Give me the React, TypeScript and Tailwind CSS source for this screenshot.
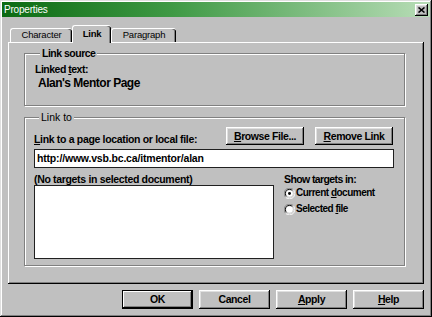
import React from "react";

const raised =
  "shadow-[inset_-1px_-1px_0_#000,inset_1px_1px_0_#fff,inset_-2px_-2px_0_#808080,inset_2px_2px_0_#dfdfdf]";

function Btn({ children, w, def }: { children: React.ReactNode; w: string; def?: boolean }) {
  return (
    <div
      className={`${w} h-[19px] bg-[#c0c0c0] flex items-center justify-center text-[10.5px] tracking-[-0.4px] font-bold leading-none ${
        def
          ? "border border-black shadow-[inset_-1px_-1px_0_#000,inset_1px_1px_0_#fff,inset_-2px_-2px_0_#808080]"
          : raised
      }`}
    >
      {children}
    </div>
  );
}

function Radio({ checked }: { checked?: boolean }) {
  return (
    <svg width="11" height="11" viewBox="0 0 12 12" className="shrink-0">
      <path d="M10.2 1.8 A5.5 5.5 0 0 0 1.8 10.2" stroke="#808080" strokeWidth="1" fill="none" />
      <path d="M1.8 10.2 A5.5 5.5 0 0 0 10.2 1.8" stroke="#ffffff" strokeWidth="1" fill="none" />
      <path d="M9.2 2.8 A4.5 4.5 0 0 0 2.8 9.2" stroke="#000" strokeWidth="1" fill="none" />
      <path d="M2.8 9.2 A4.5 4.5 0 0 0 9.2 2.8" stroke="#dfdfdf" strokeWidth="1" fill="none" />
      <circle cx="6" cy="6" r="3.6" fill="#fff" />
      {checked && <circle cx="6" cy="6" r="1.6" fill="#000" />}
    </svg>
  );
}

export default function App() {
  return (
    <div className="w-[432px] h-[317px] bg-[#c0c0c0] p-[2px] font-['Liberation_Sans',Arial,sans-serif] text-black flex flex-col overflow-hidden shadow-[inset_-1px_-1px_0_#000,inset_1px_1px_0_#dfdfdf,inset_-2px_-2px_0_#808080,inset_2px_2px_0_#fff]">
      {/* Title bar */}
      <div className="h-[15px] flex items-center justify-between bg-[linear-gradient(to_right,#0b6a12,#3f9a45_40%,#b8ddb7)]">
        <span className="pl-[2px] text-[10px] tracking-[-0.2px] text-white leading-none">Properties</span>
        <div className={`w-[13px] h-[12px] mr-[2px] bg-[#c0c0c0] flex items-center justify-center ${raised}`}>
          <svg width="7" height="6" viewBox="0 0 7 6">
            <path d="M0.5 0.5 L6.5 5.5 M6.5 0.5 L0.5 5.5" stroke="#000" strokeWidth="1.6" />
          </svg>
        </div>
      </div>

      {/* Tabs */}
      <div className="flex items-end ml-[8px] mt-[8px] h-[17px]">
        <div className="w-[62px] h-[14px] border-t border-l border-white rounded-t-[3px] shadow-[inset_-1px_0_0_#000,inset_-2px_0_0_#808080] flex items-end justify-center pb-[2px] text-[9.5px] tracking-[-0.2px] leading-[10px]">
          Character
        </div>
        <div className="relative z-10 w-[39px] h-[18px] -mb-[1px] bg-[#c0c0c0] border-t border-l border-white rounded-t-[3px] shadow-[inset_-1px_0_0_#000,inset_-2px_0_0_#808080] flex items-end justify-center pb-[4px] text-[9.5px] tracking-[-0.2px] leading-[10px] font-bold">
          Link
        </div>
        <div className="w-[65px] h-[14px] border-t border-l border-white rounded-t-[3px] shadow-[inset_-1px_0_0_#000,inset_-2px_0_0_#808080] flex items-end justify-center pb-[2px] text-[9.5px] tracking-[-0.2px] leading-[10px]">
          Paragraph
        </div>
      </div>

      {/* Panel */}
      <div className="ml-[6px] w-[416px] h-[242px] pl-[16px] pt-[6px] shadow-[inset_-1px_-1px_0_#000,inset_1px_1px_0_#fff,inset_-2px_-2px_0_#808080]">
        <fieldset className="w-[381px] h-[58px] border border-[#808080] shadow-[1px_1px_0_#fff,inset_1px_1px_0_#fff] pl-[10px] pt-[5px]">
          <legend className="ml-[5px] px-[2px] text-[10.5px] tracking-[-0.5px] leading-[10px] font-bold bg-[#c0c0c0]">
            Link source
          </legend>
          <div className="text-[10.5px] tracking-[-0.5px] leading-[12px] font-bold">
            Linked <u>t</u>ext:
          </div>
          <div className="mt-[2px] ml-[3px] text-[12px] tracking-[-0.5px] leading-[13px] font-bold">
            Alan's Mentor Page
          </div>
        </fieldset>

        <fieldset className="mt-[6px] w-[381px] h-[154px] border border-[#808080] shadow-[1px_1px_0_#fff,inset_1px_1px_0_#fff] pl-[9px] pt-[5px]">
          <legend className="ml-[5px] px-[2px] text-[10.5px] leading-[10px] bg-[#c0c0c0]">Link to</legend>
          <div className="w-[359px] h-[18px] flex items-end">
            <div className="flex-1 text-[10.5px] tracking-[-0.33px] leading-[12px] font-bold">
              <u>L</u>ink to a page location or local file:
            </div>
            <Btn w="w-[78px] !h-[18px] self-start">
              <span>
                <u>B</u>rowse File...
              </span>
            </Btn>
            <div className="w-[11px]" />
            <Btn w="w-[78px] !h-[18px] self-start">
              <span>
                <u>R</u>emove Link
              </span>
            </Btn>
          </div>
          <div className="mt-[4px] w-[360px] h-[19px] bg-white border border-[#202020] pl-[2px] flex items-center text-[10.5px] tracking-[-0.18px] font-bold leading-none">
            http://www.vsb.bc.ca/itmentor/alan
          </div>
          <div className="mt-[5px] flex">
            <div className="w-[240px]">
              <div className="text-[10.5px] tracking-[-0.33px] leading-[12px] font-bold">
                (No targets in selected document)
              </div>
              <div className="w-[240px] h-[74px] bg-white border border-[#202020]" />
            </div>
            <div className="ml-[10px] flex flex-col">
              <div className="text-[10.5px] tracking-[-0.6px] leading-[12px] font-bold">Show targets in:</div>
              <div className="mt-[2px] h-[12px] flex items-center">
                <Radio checked />
                <span className="ml-[1px] text-[10px] tracking-[-0.5px] leading-none font-bold">
                  Current <u>d</u>ocument
                </span>
              </div>
              <div className="mt-[4px] h-[12px] flex items-center">
                <Radio />
                <span className="ml-[1px] text-[10px] tracking-[-0.5px] leading-none font-bold">
                  Selected <u>f</u>ile
                </span>
              </div>
            </div>
          </div>
        </fieldset>
      </div>

      {/* Bottom buttons */}
      <div className="ml-[6px] w-[416px] mt-[6px] flex justify-end gap-[6px]">
        <Btn w="w-[71px]" def>
          OK
        </Btn>
        <Btn w="w-[71px]">Cancel</Btn>
        <Btn w="w-[71px]">
          <span>
            <u>A</u>pply
          </span>
        </Btn>
        <Btn w="w-[71px]">
          <span>
            <u>H</u>elp
          </span>
        </Btn>
      </div>
    </div>
  );
}
